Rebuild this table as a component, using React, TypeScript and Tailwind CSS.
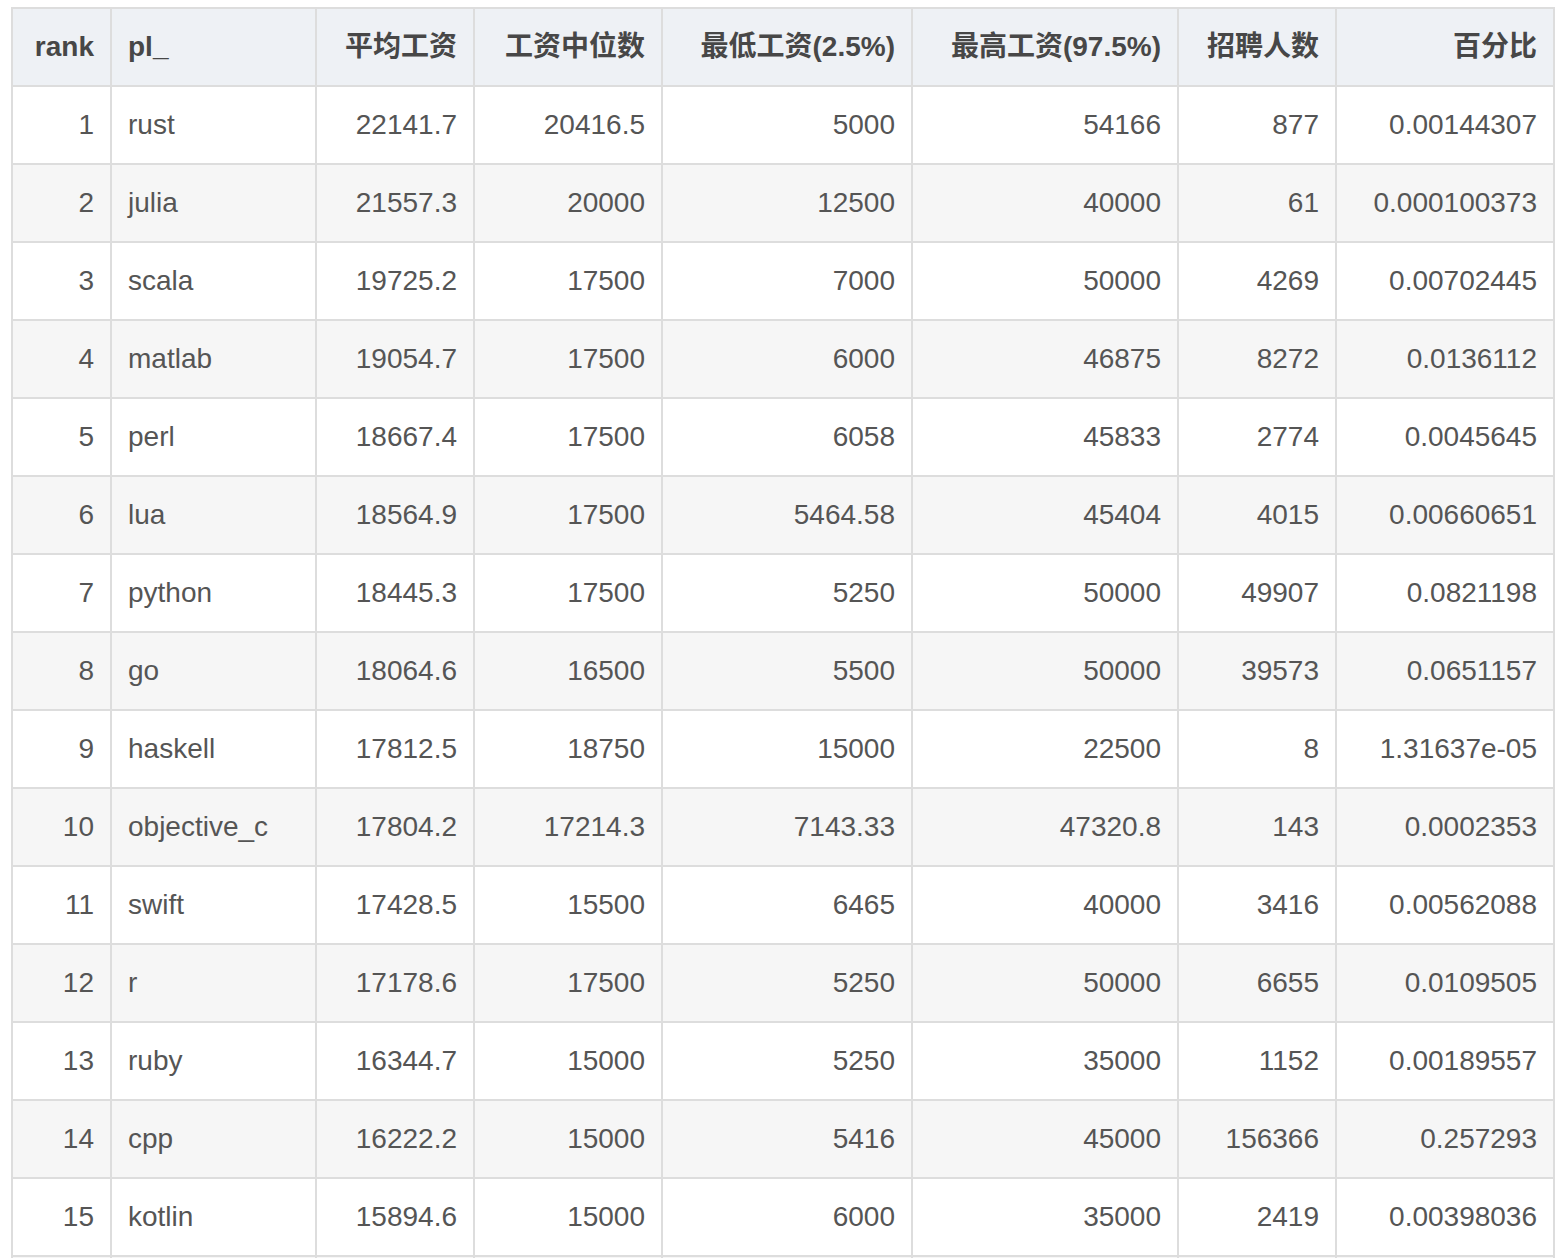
const cols = [
  { label: "rank", w: "w-[99px]", align: "text-right" },
  { label: "pl_", w: "w-[205px]", align: "text-left" },
  { label: "平均工资", w: "w-[158px]", align: "text-right" },
  { label: "工资中位数", w: "w-[188px]", align: "text-right" },
  { label: "最低工资(2.5%)", w: "w-[250px]", align: "text-right" },
  { label: "最高工资(97.5%)", w: "w-[266px]", align: "text-right" },
  { label: "招聘人数", w: "w-[158px]", align: "text-right" },
  { label: "百分比", w: "w-[218px]", align: "text-right" },
];

const rows: string[][] = [
  ["1", "rust", "22141.7", "20416.5", "5000", "54166", "877", "0.00144307"],
  ["2", "julia", "21557.3", "20000", "12500", "40000", "61", "0.000100373"],
  ["3", "scala", "19725.2", "17500", "7000", "50000", "4269", "0.00702445"],
  ["4", "matlab", "19054.7", "17500", "6000", "46875", "8272", "0.0136112"],
  ["5", "perl", "18667.4", "17500", "6058", "45833", "2774", "0.0045645"],
  ["6", "lua", "18564.9", "17500", "5464.58", "45404", "4015", "0.00660651"],
  ["7", "python", "18445.3", "17500", "5250", "50000", "49907", "0.0821198"],
  ["8", "go", "18064.6", "16500", "5500", "50000", "39573", "0.0651157"],
  ["9", "haskell", "17812.5", "18750", "15000", "22500", "8", "1.31637e-05"],
  ["10", "objective_c", "17804.2", "17214.3", "7143.33", "47320.8", "143", "0.0002353"],
  ["11", "swift", "17428.5", "15500", "6465", "40000", "3416", "0.00562088"],
  ["12", "r", "17178.6", "17500", "5250", "50000", "6655", "0.0109505"],
  ["13", "ruby", "16344.7", "15000", "5250", "35000", "1152", "0.00189557"],
  ["14", "cpp", "16222.2", "15000", "5416", "45000", "156366", "0.257293"],
  ["15", "kotlin", "15894.6", "15000", "6000", "35000", "2419", "0.00398036"],
  // next row only peeks in at the bottom edge
  ["", "", "", "", "", "", "", ""],
];

export default function App() {
  return (
    <div className="h-[1258px] overflow-hidden bg-white pl-[11px] pt-[7px] font-['Liberation_Sans','Noto_Sans_CJK_SC',sans-serif]">
      <table className="w-[1542px] table-fixed border-collapse text-[28px] text-[#555]">
        <thead>
          <tr className="h-[78px] bg-[#eef1f5]">
            {cols.map((c) => (
              <th
                key={c.label}
                className={`${c.w} ${c.align} border-2 border-[#dddddd] px-4 font-bold text-[#474747]`}
              >
                {c.label}
              </th>
            ))}
          </tr>
        </thead>
        <tbody>
          {rows.map((r, i) => (
            <tr key={i} className={`h-[78px] ${i % 2 === 1 ? "bg-[#f6f6f6]" : "bg-white"}`}>
              {r.map((v, j) => (
                <td
                  key={j}
                  className={`${cols[j].align} border-2 border-[#dddddd] px-4 whitespace-nowrap`}
                >
                  {v}
                </td>
              ))}
            </tr>
          ))}
        </tbody>
      </table>
    </div>
  );
}
